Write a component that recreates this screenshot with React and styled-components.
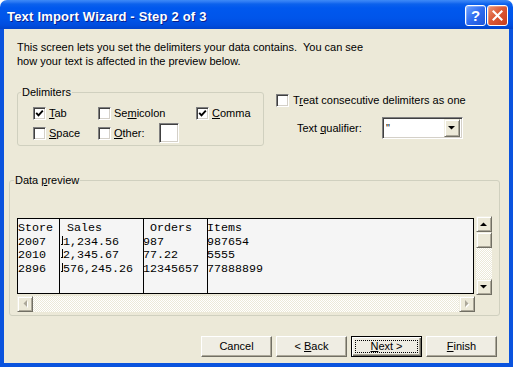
import React from "react";
import styled, { createGlobalStyle } from "styled-components";

const Global = createGlobalStyle`
  html, body { margin: 0; padding: 0; background: #ffffff; }
  body { font-family: "Liberation Sans", Arial, sans-serif; font-size: 11px; color: #000; }
  * { box-sizing: border-box; }
`;

const Window = styled.div`
  width: 513px;
  height: 367px;
  display: flex;
  flex-direction: column;
`;

const TitleBar = styled.div`
  height: 29px;
  flex: none;
  display: flex;
  align-items: flex-start;
  padding: 5px 5px 0 7px;
  border-radius: 7px 7px 0 0;
  background: linear-gradient(
    to bottom,
    #3d8af7 0px,
    #2a78f3 2px,
    #0c62ec 4px,
    #0058ee 8px,
    #0055ea 18px,
    #004ddf 25px,
    #0043cc 29px
  );
`;

const Title = styled.div`
  flex: 1;
  margin-top: 4px;
  font: bold 13px/15px "Liberation Sans", Arial, sans-serif;
  letter-spacing: 0.2px;
  color: #ffffff;
  text-shadow: 1px 1px #0a1e8c;
`;

const CaptionButton = styled.div`
  width: 21px;
  height: 21px;
  margin-left: ${(p) => p.$gap || 0}px;
  border: 1px solid #ffffff;
  border-radius: 3px;
  display: flex;
  align-items: center;
  justify-content: center;
  color: #ffffff;
  font: bold 15px/1 "Liberation Sans", Arial, sans-serif;
  background: ${(p) =>
    p.$close
      ? "linear-gradient(135deg, #ec9677 0%, #dc5a36 45%, #c83c1c 100%)"
      : "linear-gradient(135deg, #6fa2ff 0%, #2f6cf0 50%, #1c55d9 100%)"};
  box-shadow: inset 1px 1px rgba(255, 255, 255, 0.25);
`;

const Frame = styled.div`
  flex: 1;
  display: flex;
  flex-direction: column;
  background: #ece9d8;
  border: 4px solid #0a53de;
  border-top: 0;
`;

const Description = styled.p`
  margin: 11px 0 0 13px;
  line-height: 14px;
`;

const OptionsRow = styled.div`
  display: flex;
  align-items: flex-start;
  margin: 18px 0 0 13px;
`;

const Group = styled.fieldset`
  margin: 0;
  padding: 0;
  min-width: 0;
  width: ${(p) => p.$width}px;
  border: 1px solid #d0d0bf;
  border-radius: 3px;
`;

const Legend = styled.legend`
  padding: 0 1px;
  margin-left: ${(p) => p.$offset}px;
  line-height: 13px;
  font-size: 11px;
`;

const DelimGrid = styled.div`
  display: grid;
  grid-template-columns: 65px 98px auto;
  grid-auto-rows: 20px;
  align-items: center;
  padding: 4px 0 2px 15px;
`;

const CheckItem = styled.label`
  display: flex;
  align-items: center;
  gap: ${(p) => p.$gap || 3}px;
  line-height: 13px;
  white-space: nowrap;
`;

const Box = styled.span`
  width: 13px;
  height: 13px;
  flex: none;
  display: flex;
  align-items: center;
  justify-content: center;
  background: #ffffff;
  border: 1px solid;
  border-color: #808080 #ffffff #ffffff #808080;
  box-shadow: inset 1px 1px #404040, inset -1px -1px #d4d0c8;
`;

const U = styled.span`
  text-decoration: underline;
  text-underline-offset: 1px;
`;

const SmallInput = styled.span`
  width: 20px;
  height: 20px;
  margin-left: 11px;
  background: #ffffff;
  border: 1px solid;
  border-color: #808080 #ffffff #ffffff #808080;
  box-shadow: inset 1px 1px #404040, inset -1px -1px #d4d0c8;
`;

const RightCol = styled.div`
  display: flex;
  flex-direction: column;
  margin: 8px 0 0 12px;
`;

const QualifierRow = styled.div`
  display: flex;
  align-items: center;
  margin-top: 10px;
  padding-left: 21px;
`;

const QualifierLabel = styled.span`
  width: 85px;
`;

const Combo = styled.div`
  width: 81px;
  height: 22px;
  padding: 2px;
  display: flex;
  align-items: center;
  justify-content: space-between;
  background: #ffffff;
  border: 1px solid;
  border-color: #808080 #ffffff #ffffff #808080;
  box-shadow: inset 1px 1px #404040, inset -1px -1px #d4d0c8;
`;

const ComboValue = styled.span`
  padding-left: 1px;
  line-height: 13px;
`;

const RaisedButton = styled.span`
  width: 16px;
  height: ${(p) => p.$h || 16}px;
  flex: none;
  display: flex;
  align-items: center;
  justify-content: center;
  background: #ece9d8;
  border: 1px solid;
  border-color: #f1efe2 #716f64 #716f64 #f1efe2;
  box-shadow: inset 1px 1px #ffffff, inset -1px -1px #aca899;
`;

const DataGroup = styled(Group)`
  margin: 28px 0 0 5px;
`;

const DataInner = styled.div`
  padding: 29px 7px 3px 7px;
`;

const PreviewGrid = styled.div`
  display: grid;
  grid-template-columns: 459px 16px;
  grid-template-rows: 80px 16px;
`;

const PreviewBox = styled.div`
  grid-row: 1;
  grid-column: 1;
  margin-top: 2px;
  width: 457px;
  height: 76px;
  border: 1px solid #000000;
  background: #f5f5f5;
  display: flex;
  overflow: hidden;
  font-family: "Liberation Mono", "Courier New", monospace;
  font-size: 11.67px;
  line-height: 13.67px;
`;

const Column = styled.div`
  flex: ${(p) => (p.$width ? "none" : "1")};
  width: ${(p) => (p.$width ? `${p.$width}px` : "auto")};
  padding-top: 3px;
  border-right: ${(p) => (p.$width ? "1px solid #000000" : "0")};
  overflow: hidden;
  white-space: pre;
`;

const Line = styled.div`
  margin-left: ${(p) => p.$shift || 0}px;
`;

const TabMark = styled.span`
  display: inline-block;
  width: 2px;
  height: 9px;
  margin-left: 1px;
  border-right: 1px solid #000000;
  border-bottom: 1px solid #000000;
  vertical-align: baseline;
`;

const Track = styled.div`
  display: flex;
  background: repeating-conic-gradient(#ece9d8 0 25%, #ffffff 0 50%) 0 0 / 2px 2px;
`;

const VScroll = styled(Track)`
  grid-row: 1;
  grid-column: 2;
  height: 79px;
  flex-direction: column;
  justify-content: space-between;
`;

const VScrollTop = styled.div`
  display: flex;
  flex-direction: column;
`;

const HScroll = styled(Track)`
  grid-row: 2;
  grid-column: 1;
  width: 458px;
  height: 16px;
  justify-content: space-between;
`;

const ButtonsRow = styled.div`
  display: flex;
  justify-content: flex-end;
  gap: 4px;
  margin-top: 20px;
  padding-right: 12px;
`;

const PushButton = styled.div`
  width: 71px;
  height: 21px;
  padding: 3px;
  display: flex;
  background: #efede3;
  border: 1px solid;
  border-color: ${(p) => (p.$default ? "#000000" : "#ffffff #716f64 #716f64 #ffffff")};
  box-shadow: ${(p) =>
    p.$default
      ? "inset 1px 1px #ffffff, inset -1px -1px #716f64, inset -2px -2px #aca899"
      : "inset -1px -1px #aca899"};
`;

const FocusRing = styled.span`
  flex: 1;
  display: flex;
  align-items: center;
  justify-content: center;
  line-height: 13px;
  white-space: pre;
  border: 1px dotted ${(p) => (p.$on ? "#000000" : "transparent")};
`;

const Check = () => (
  <svg width="9" height="9" viewBox="0 0 9 9">
    <polyline points="1.2,3.8 3.5,6.3 7.8,1.6" fill="none" stroke="#000" strokeWidth="1.9" />
  </svg>
);

const Arrow = ({ dir, disabled }) => {
  const pts = {
    up: "0,4 7,4 3.5,0.5",
    down: "0,0 7,0 3.5,3.5",
    left: "4,0 4,7 0.5,3.5",
    right: "0,0 0,7 3.5,3.5",
  }[dir];
  const horiz = dir === "left" || dir === "right";
  const w = horiz ? 5 : 8;
  const h = horiz ? 8 : 5;
  return (
    <svg width={w} height={h} viewBox={`0 0 ${w} ${h}`}>
      {disabled && <polygon points={pts} fill="#ffffff" transform="translate(1,1)" />}
      <polygon points={pts} fill={disabled ? "#aca899" : "#000000"} />
    </svg>
  );
};

const CheckBox = ({ checked, children, gap }) => (
  <CheckItem $gap={gap}>
    <Box>{checked && <Check />}</Box>
    <span>{children}</span>
  </CheckItem>
);

const columns = [
  { width: 42, lines: ["Store", "2007", "2010", "2896"] },
  { width: 84, lines: [" Sales", "TAB1,234.56", "TAB2,345.67", "TAB576,245.26"] },
  { width: 64, shift: -1, lines: [" Orders", "987", "77.22", "12345657"] },
  { shift: -1, lines: ["Items", "987654", "5555", "77888899"] },
];

export default function App() {
  return (
    <>
      <Global />
      <Window>
        <TitleBar>
          <Title>Text Import Wizard - Step 2 of 3</Title>
          <CaptionButton>?</CaptionButton>
          <CaptionButton $close $gap={1}>
            <svg width="11" height="11" viewBox="0 0 11 11">
              <path d="M1.5 1.5 L9.5 9.5 M9.5 1.5 L1.5 9.5" stroke="#fff" strokeWidth="2.1" strokeLinecap="square" />
            </svg>
          </CaptionButton>
        </TitleBar>
        <Frame>
          <Description>
            This screen lets you set the delimiters your data contains.&nbsp; You can see
            <br />
            how your text is affected in the preview below.
          </Description>

          <OptionsRow>
            <Group $width={247}>
              <Legend $offset={3}>Delimiters</Legend>
              <DelimGrid>
                <CheckBox checked>
                  <U>T</U>ab
                </CheckBox>
                <CheckBox>
                  Se<U>m</U>icolon
                </CheckBox>
                <CheckBox checked>
                  <U>C</U>omma
                </CheckBox>
                <CheckBox>
                  <U>S</U>pace
                </CheckBox>
                <CheckItem>
                  <Box />
                  <span>
                    <U>O</U>ther:
                  </span>
                  <SmallInput />
                </CheckItem>
              </DelimGrid>
            </Group>

            <RightCol>
              <CheckBox gap={4}>
                T<U>r</U>eat consecutive delimiters as one
              </CheckBox>
              <QualifierRow>
                <QualifierLabel>
                  Text <U>q</U>ualifier:
                </QualifierLabel>
                <Combo>
                  <ComboValue>"</ComboValue>
                  <RaisedButton $h={18}>
                    <Arrow dir="down" />
                  </RaisedButton>
                </Combo>
              </QualifierRow>
            </RightCol>
          </OptionsRow>

          <DataGroup $width={491}>
            <Legend $offset={4}>
              Data <U>p</U>review
            </Legend>
            <DataInner>
              <PreviewGrid>
                <PreviewBox>
                  {columns.map((col, i) => (
                    <Column key={i} $width={col.width}>
                      {col.lines.map((l, j) => (
                        <Line key={j} $shift={col.shift}>
                          {l.startsWith("TAB") ? (
                            <>
                              <TabMark />
                              {l.slice(3)}
                            </>
                          ) : (
                            l
                          )}
                        </Line>
                      ))}
                    </Column>
                  ))}
                </PreviewBox>
                <VScroll>
                  <VScrollTop>
                    <RaisedButton>
                      <Arrow dir="up" />
                    </RaisedButton>
                    <RaisedButton />
                  </VScrollTop>
                  <RaisedButton>
                    <Arrow dir="down" />
                  </RaisedButton>
                </VScroll>
                <HScroll>
                  <RaisedButton>
                    <Arrow dir="left" disabled />
                  </RaisedButton>
                  <RaisedButton>
                    <Arrow dir="right" disabled />
                  </RaisedButton>
                </HScroll>
              </PreviewGrid>
            </DataInner>
          </DataGroup>

          <ButtonsRow>
            <PushButton>
              <FocusRing>Cancel</FocusRing>
            </PushButton>
            <PushButton>
              <FocusRing>
                <span>
                  {"< "}
                  <U>B</U>ack
                </span>
              </FocusRing>
            </PushButton>
            <PushButton $default>
              <FocusRing $on>
                <span>
                  <U>N</U>
                  {"ext >"}
                </span>
              </FocusRing>
            </PushButton>
            <PushButton>
              <FocusRing>
                <span>
                  <U>F</U>inish
                </span>
              </FocusRing>
            </PushButton>
          </ButtonsRow>
        </Frame>
      </Window>
    </>
  );
}
